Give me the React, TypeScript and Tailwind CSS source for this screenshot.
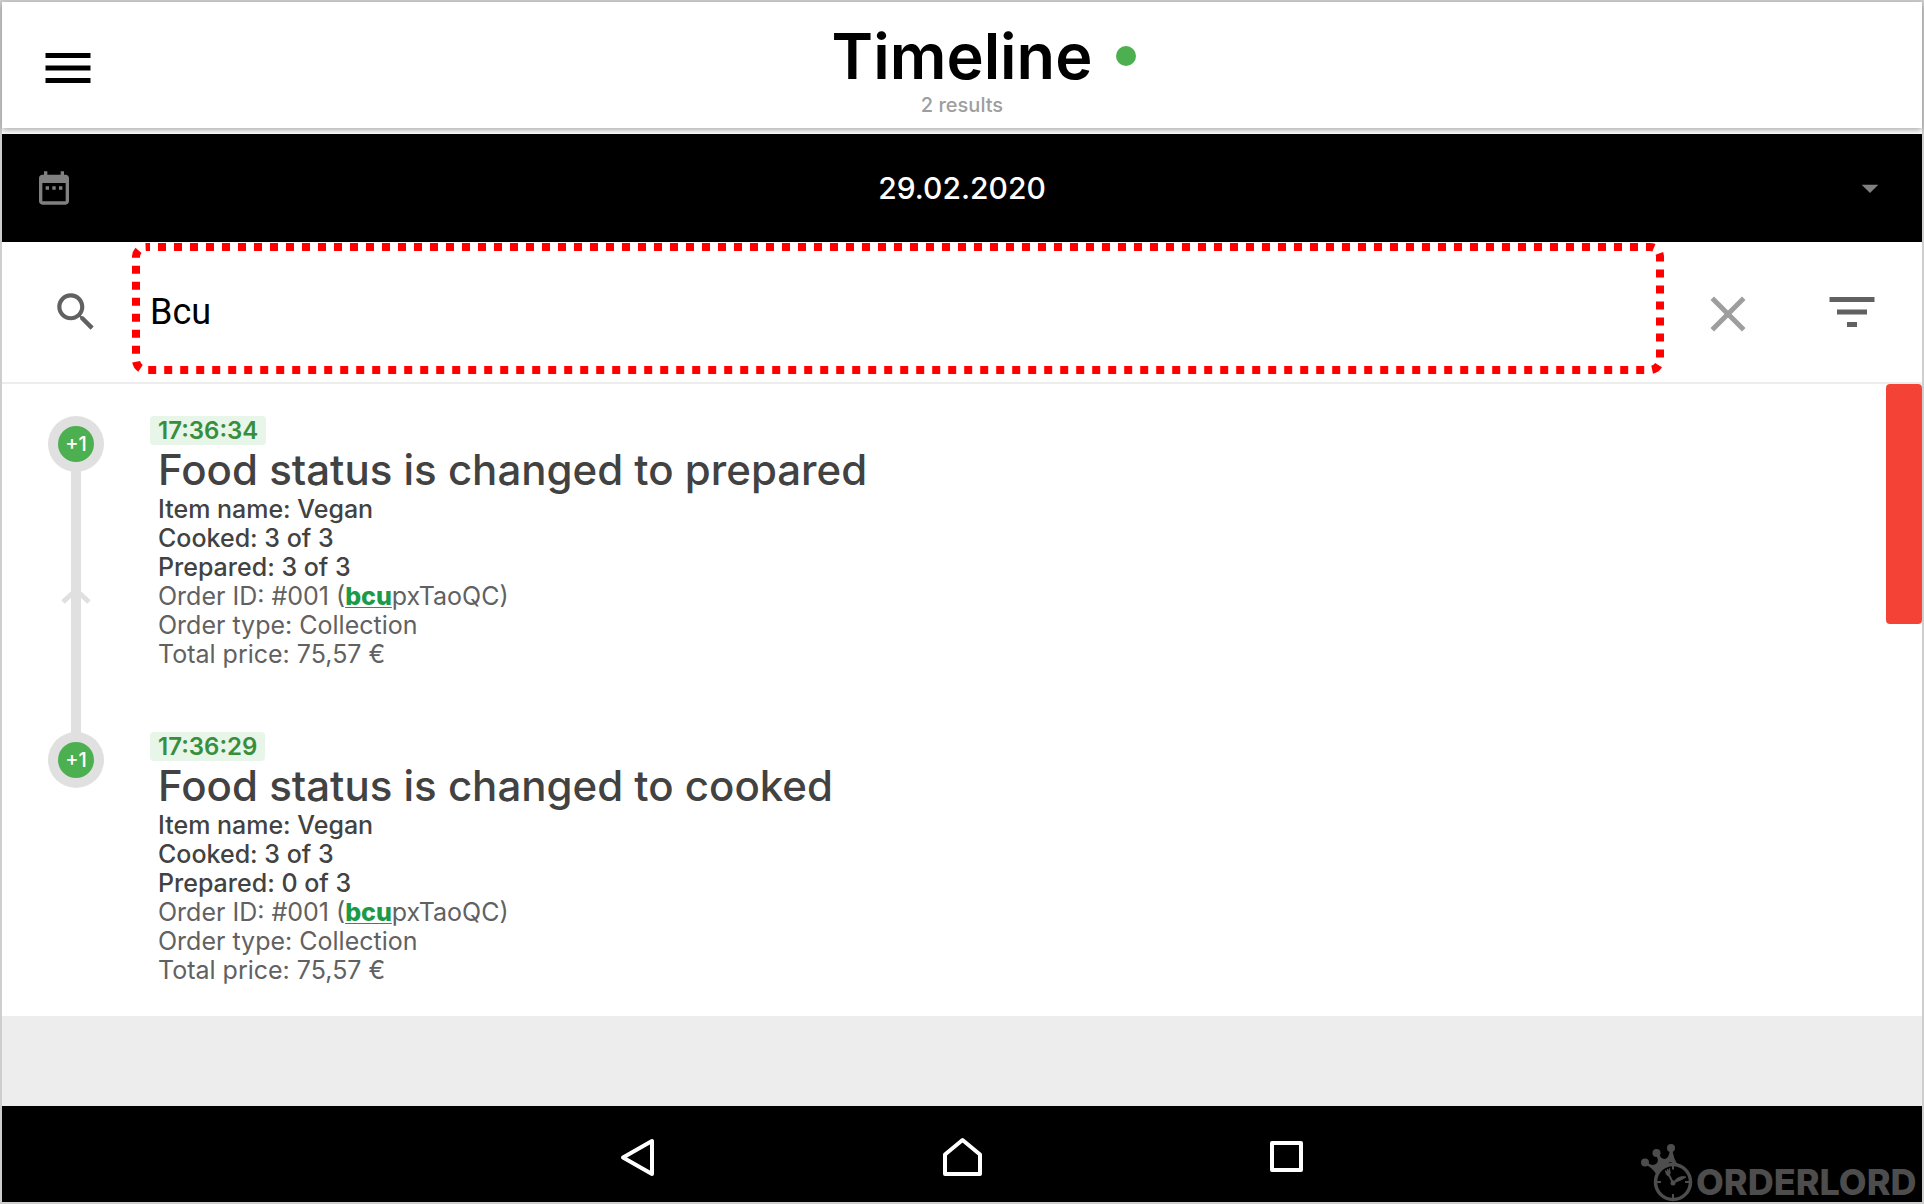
import { useState } from "react";

type Entry = {
  time: string;
  title: string;
  facts: string[];
};

const entries: Entry[] = [
  {
    time: "17:36:34",
    title: "Food status is changed to prepared",
    facts: ["Item name: Vegan", "Cooked: 3 of 3", "Prepared: 3 of 3"],
  },
  {
    time: "17:36:29",
    title: "Food status is changed to cooked",
    facts: ["Item name: Vegan", "Cooked: 3 of 3", "Prepared: 0 of 3"],
  },
];

function Icon({ d, className }: { d: string; className: string }) {
  return (
    <svg viewBox="0 0 24 24" fill="currentColor" aria-hidden="true" className={className}>
      <path d={d} />
    </svg>
  );
}

const icons = {
  menu: "M3 18h18v-2H3v2zm0-5h18v-2H3v2zm0-7v2h18V6H3z",
  calendar:
    "M9 11H7v2h2v-2zm4 0h-2v2h2v-2zm4 0h-2v2h2v-2zm2-7h-1V2h-2v2H8V2H6v2H5c-1.11 0-1.99.9-1.99 2L3 20c0 1.1.89 2 2 2h14c1.1 0 2-.9 2-2V6c0-1.1-.9-2-2-2zm0 16H5V9h14v11z",
  caret: "M7 10l5 5 5-5z",
  search:
    "M15.5 14h-.79l-.28-.27C15.41 12.59 16 11.11 16 9.5 16 5.91 13.09 3 9.5 3S3 5.91 3 9.5 5.91 16 9.5 16c1.61 0 3.09-.59 4.23-1.57l.27.28v.79l5 4.99L20.49 19l-4.99-5zm-6 0C7.01 14 5 11.99 5 9.5S7.01 5 9.5 5 14 7.01 14 9.5 11.99 14 9.5 14z",
  close:
    "M19 6.41L17.59 5 12 10.59 6.41 5 5 6.41 10.59 12 5 17.59 6.41 19 12 13.41 17.59 19 19 17.59 13.41 12z",
  filter: "M10 18h4v-2h-4v2zM3 6v2h18V6H3zm3 7h12v-2H6v2z",
};

function Header() {
  return (
    <header className="relative z-10 grid h-[126px] grid-cols-[1fr_auto_1fr] bg-white shadow-[0_2px_6px_rgba(0,0,0,0.35)]">
      <button type="button" aria-label="Menu" className="mt-9 ml-9 size-[60px] text-black">
        <Icon d={icons.menu} className="size-full" />
      </button>
      <div className="flex flex-col items-center pt-[18px]">
        <h1 className="text-[63px] leading-[73px] font-semibold text-black">Timeline</h1>
        <p className="text-xl leading-6 font-medium text-[#9e9e9e]">2 results</p>
      </div>
      <span role="status" aria-label="Connected" className="mt-11 ml-6 size-5 rounded-full bg-[#4caf50]" />
    </header>
  );
}

function DateBar() {
  return (
    <button
      type="button"
      className="mt-1.5 grid h-[108px] w-full grid-cols-[1fr_auto_1fr] items-center bg-black px-8 text-[#808080]"
    >
      <Icon d={icons.calendar} className="size-10" />
      <span className="text-3xl leading-10 font-medium text-white">29.02.2020</span>
      <Icon d={icons.caret} className="size-10 justify-self-end" />
    </button>
  );
}

function SearchBar() {
  const [query, setQuery] = useState("Bcu");
  return (
    <div className="flex h-[142px] items-center border-b-2 border-[#ededed] bg-white pr-10">
      <label htmlFor="query" aria-label="Search" className="w-[130px] shrink-0 pl-[49px] text-[#616161]">
        <Icon d={icons.search} className="size-[50px]" />
      </label>
      <div className="relative h-full flex-1">
        <input
          id="query"
          type="text"
          value={query}
          onChange={(e) => setQuery(e.target.value)}
          className="h-full w-full bg-transparent px-[18px] font-[Roboto,sans-serif] text-4xl text-black outline-none"
        />
        <div className="pointer-events-none absolute inset-x-1 top-[5px] bottom-3">
          <svg aria-hidden="true" className="size-full overflow-visible">
            <rect
              width="100%"
              height="100%"
              rx="10"
              fill="none"
              stroke="#ff0000"
              strokeWidth="8"
              strokeDasharray="8 8"
              strokeDashoffset="4"
            />
          </svg>
        </div>
      </div>
      <button
        type="button"
        aria-label="Clear search"
        onClick={() => setQuery("")}
        className="mt-1 ml-[34px] size-[60px] text-[#9e9e9e]"
      >
        <Icon d={icons.close} className="size-full" />
      </button>
      <button type="button" aria-label="Filter" className="ml-16 size-[60px] text-[#616161]">
        <Icon d={icons.filter} className="size-full" />
      </button>
    </div>
  );
}

function TimelineEntry({ entry, last }: { entry: Entry; last: boolean }) {
  return (
    <li className="flex gap-[46px]">
      <div className="flex w-14 flex-col items-center">
        <span className="flex size-14 shrink-0 items-center justify-center rounded-full bg-[#e0e0e0]">
          <span className="flex size-9 items-center justify-center rounded-full bg-[#4caf50] text-xl font-medium text-white">
            +1
          </span>
        </span>
        {!last && (
          <span className="-my-1 flex w-2.5 flex-1 items-center justify-center bg-[#e0e0e0] pb-3">
            <svg
              viewBox="0 0 30 16"
              fill="none"
              stroke="#e0e0e0"
              strokeWidth="5"
              aria-hidden="true"
              className="h-4 w-[30px] shrink-0"
            >
              <path d="M2 14 15 2l13 12" />
            </svg>
          </span>
        )}
      </div>
      <article className={last ? "pb-[31px]" : "pb-[63px]"}>
        <time className="block w-fit rounded bg-[#e8f5e9] px-2 text-2xl leading-[29px] font-semibold text-[#388e3c]">
          {entry.time}
        </time>
        <div className="pl-2 text-[25px] leading-[29px] text-[#616161]">
          <h2 className="text-[42px] leading-[50px] font-medium text-[#424242]">{entry.title}</h2>
          {entry.facts.map((fact) => (
            <p key={fact} className="font-medium text-[#424242]">
              {fact}
            </p>
          ))}
          <p>
            Order ID: #001 (
            <mark className="bg-transparent font-extrabold text-[#1b9a48] underline decoration-1 underline-offset-2">
              bcu
            </mark>
            pxTaoQC)
          </p>
          <p>Order type: Collection</p>
          <p>Total price: 75,57 €</p>
        </div>
      </article>
    </li>
  );
}

function Brand() {
  return (
    <div className="absolute right-0 bottom-0 flex h-[60px] w-[282px] items-end text-[#4d4d4d]">
      <svg viewBox="0 0 56 60" fill="none" stroke="currentColor" aria-hidden="true" className="h-[60px] w-14 shrink-0">
        <g fill="currentColor" stroke="none">
          <circle cx="5" cy="20.5" r="4" />
          <circle cx="16.5" cy="11" r="4" />
          <circle cx="31" cy="6" r="4" />
          <path d="M4 22 7 20.500Q13 25 17 21 19 18 16 13l3-1Q22 19 27 16q3-3 2.500-9l3 0Q33 16 38 23L30 20 16 32Q12 25 4 22z" />
        </g>
        <circle cx="33" cy="40" r="17.5" strokeWidth="3.5" fill="#000000" />
        <path d="M33 22.500v5M33 52v5M16 40h5M45 40h5" strokeWidth="2" />
        <path d="M33 41 29 33" strokeWidth="2" strokeLinecap="round" />
        <path d="M33 41Q38 33 46 35 42 38 33 41zM25.500 28.500Q26 34 29 34 31 32 29.500 26.500l-1 3.500-1-3-.5 3.500z" fill="currentColor" strokeWidth="1" />
        <circle cx="33" cy="41" r="2.5" fill="currentColor" stroke="none" />
      </svg>
      <span className="text-4xl leading-10 font-extrabold">ORDERLORD</span>
    </div>
  );
}

function SystemNav() {
  return (
    <nav
      aria-label="System"
      className="relative flex h-24 items-center justify-center gap-[276px] bg-black pt-2 text-white"
    >
      <button type="button" aria-label="Back" className="size-12">
        <svg viewBox="0 0 48 48" fill="none" stroke="currentColor" strokeWidth="4" strokeLinejoin="round">
          <path d="M38 7v33L9 23.500z" />
        </svg>
      </button>
      <button type="button" aria-label="Home" className="size-12">
        <svg viewBox="0 0 48 48" fill="none" stroke="currentColor" strokeWidth="4" strokeLinejoin="round">
          <path d="M7 40V20.500L24.500 6 42 20.500V40z" />
        </svg>
      </button>
      <button type="button" aria-label="Recent apps" className="size-12">
        <svg viewBox="0 0 48 48" fill="none" stroke="currentColor" strokeWidth="4" strokeLinejoin="round">
          <path d="M10 9h29v27H10z" />
        </svg>
      </button>
      <Brand />
    </nav>
  );
}

export default function App() {
  return (
    <div className="flex min-h-screen flex-col border-2 border-[#cecece] bg-white font-[Inter,sans-serif]">
      <Header />
      <DateBar />
      <SearchBar />
      <main className="relative bg-white pt-8 pl-[46px]">
        <ol>
          {entries.map((entry, i) => (
            <TimelineEntry key={entry.time} entry={entry} last={i === entries.length - 1} />
          ))}
        </ol>
        <div className="absolute top-0 right-0 h-60 w-9 rounded bg-[#f44336]" />
      </main>
      <div className="min-h-10 flex-1 bg-[#ededed]" />
      <SystemNav />
    </div>
  );
}
